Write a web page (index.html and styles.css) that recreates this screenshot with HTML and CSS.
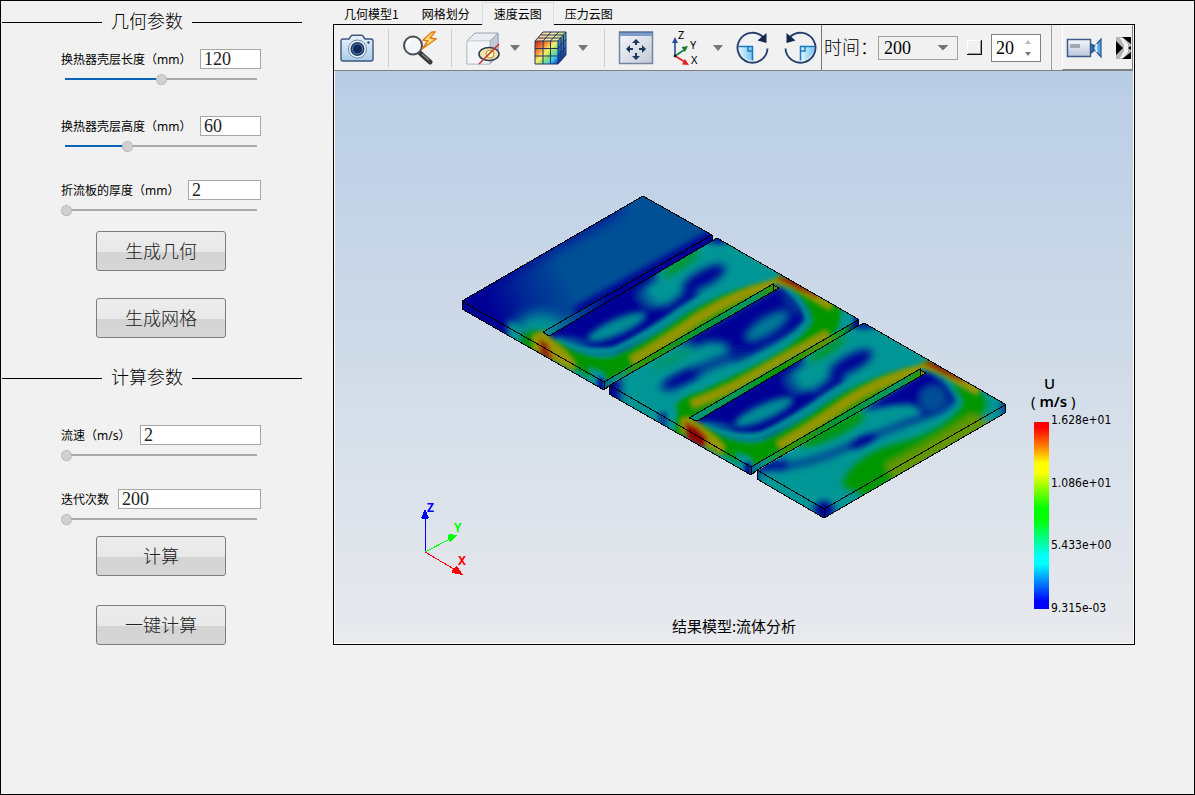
FILE: index.html
```html
<!DOCTYPE html>
<html lang="zh-CN">
<head>
<meta charset="utf-8">
<title>换热器流体分析</title>
<link rel="stylesheet" href="styles.css">
</head>
<body>
<div class="app">
  <form class="params">
    <h2 class="heading">几何参数</h2>
    <div class="field field--first">
      <div class="field-row"><label for="len">换热器壳层长度（mm）</label><input id="len" class="box" type="text" value="120"></div>
      <input class="slider" type="range" aria-label="换热器壳层长度" min="20" max="220" value="121" style="--fill:50%">
    </div>
    <div class="field field--second">
      <div class="field-row"><label for="hei">换热器壳层高度（mm）</label><input id="hei" class="box" type="text" value="60"></div>
      <input class="slider" type="range" aria-label="换热器壳层高度" min="12" max="160" value="60" style="--fill:33%">
    </div>
    <div class="field">
      <div class="field-row"><label for="thk">折流板的厚度（mm）</label><input id="thk" class="box box--m" type="text" value="2"></div>
      <input class="slider" type="range" aria-label="折流板的厚度" min="2" max="20" value="2" style="--fill:0%">
    </div>
    <div class="actions">
      <button type="button" class="push">生成几何</button>
      <button type="button" class="push">生成网格</button>
    </div>
    <h2 class="heading heading--next">计算参数</h2>
    <div class="field">
      <div class="field-row"><label for="vel">流速（m/s）</label><input id="vel" class="box box--l" type="text" value="2"></div>
      <input class="slider" type="range" aria-label="流速" min="2" max="20" value="2" style="--fill:0%">
    </div>
    <div class="field">
      <div class="field-row"><label for="itr">迭代次数</label><input id="itr" class="box box--xl" type="text" value="200"></div>
      <input class="slider" type="range" aria-label="迭代次数" min="200" max="2000" value="200" style="--fill:0%">
    </div>
    <div class="actions actions--run">
      <button type="button" class="push">计算</button>
      <button type="button" class="push">一键计算</button>
    </div>
  </form>

  <main class="view">
    <nav class="tabs">
      <button type="button" class="tab">几何模型1</button>
      <button type="button" class="tab">网格划分</button>
      <button type="button" class="tab tab--on">速度云图</button>
      <button type="button" class="tab">压力云图</button>
    </nav>
    <section class="frame">
      <div class="toolbar">
        <button type="button" class="tool" aria-label="截图">
          <svg width="36" height="34" viewBox="0 0 36 34">
            <defs><linearGradient id="cam" x2="0" y2="1"><stop stop-color="#e8f3fc"/><stop offset="1" stop-color="#a9cdea"/></linearGradient></defs>
            <path d="M2 10q0-2 2-2h6l2-3q.5-.8 1.500-.8h9q1 0 1.500.8l2 3h6q2 0 2 2v18q0 2-2 2h-28q-2 0-2-2z" fill="url(#cam)" stroke="#3c5680" stroke-width="1.400"/>
            <circle cx="18.500" cy="18" r="9" fill="#eef5fb" stroke="#6e88aa"/>
            <circle cx="18.500" cy="18" r="7" fill="#1c3b68"/><circle cx="18.500" cy="18" r="5" fill="#0e2a5a" stroke="#5b86b6"/>
            <circle cx="29.500" cy="11.500" r="1.200" fill="#29486f"/>
          </svg>
        </button>
        <span class="sep"></span>
        <button type="button" class="tool" aria-label="快速缩放">
          <svg width="36" height="34" viewBox="0 0 36 34">
            <path d="M18 22l10 9" stroke="#3b3b3b" stroke-width="5" stroke-linecap="round"/>
            <path d="M20 23l7 6" stroke="#8a8a8a" stroke-width="1.200"/>
            <circle cx="11" cy="14.500" r="9" fill="#f4f7fa" stroke="#4a4e55" stroke-width="2"/>
            <path d="M5 14a6 6 0 0 1 6-6" stroke="#fff" stroke-width="2" fill="none"/>
            <path d="M30 1L21 9l5 1-6 8 14-10-6-1 5-6z" fill="#ffe27a" stroke="#e07a10" stroke-width="1.400"/>
          </svg>
        </button>
        <span class="sep"></span>
        <button type="button" class="tool" aria-label="隐藏对象">
          <svg width="36" height="36" viewBox="0 0 36 36">
            <path d="M2 11l8-8h23v23l-8 8H2z" fill="#e9edf2" stroke="#9aa5b5" stroke-width="1"/>
            <path d="M2 11h23v23" fill="none" stroke="#b4bdc9"/><path d="M25 11l8-8v23l-8 8z" fill="#c3cbd6" stroke="#9aa5b5"/>
            <path d="M2.500 11.500h22v22h-22z" fill="#f3f5f8"/>
            <ellipse cx="24" cy="24" rx="10" ry="6.500" fill="#f4e3ab" stroke="#2f3d5c" stroke-width="1.600"/>
            <circle cx="25" cy="24" r="4" fill="#fff4c4" stroke="#b08a3c"/>
            <path d="M14 34L34 14" stroke="#c8352a" stroke-width="1.600"/>
          </svg>
        </button>
        <button type="button" class="drop" aria-label="更多"><svg width="10" height="6"><path d="M0 0h10L5 6z" fill="#777"/></svg></button>
        <button type="button" class="tool tool--gap" aria-label="云图">
          <svg width="36" height="36" viewBox="0 0 36 36">
            <defs><linearGradient id="cube" x2="1" y2="1"><stop offset=".1" stop-color="#d93a22"/><stop offset=".3" stop-color="#f98f35"/><stop offset=".48" stop-color="#f7f36b"/><stop offset=".62" stop-color="#8ee06f"/><stop offset=".78" stop-color="#3ecbea"/><stop offset=".95" stop-color="#1653cf"/></linearGradient>
            <linearGradient id="cubeT" x2="1"><stop stop-color="#ffc890"/><stop offset=".5" stop-color="#fff0a8"/><stop offset="1" stop-color="#b9dc84"/></linearGradient>
            <linearGradient id="cubeS" x2="0" y2="1"><stop stop-color="#5cb676"/><stop offset=".4" stop-color="#2377cf"/><stop offset="1" stop-color="#0a2bae"/></linearGradient></defs>
            <path d="M2 11h23v23H2z" fill="url(#cube)"/><path d="M2 11l8-9h23l-8 9z" fill="url(#cubeT)"/><path d="M25 11l8-9v23l-8 9z" fill="url(#cubeS)"/>
            <path d="M2 11h23v23H2zM2 11l8-9h23l-8 9M33 2v23l-8 9M10 11v23M17.500 11v23M2 18.500h23l8-9M2 26h23l8-9M10 11l8-9M17.500 11l8-9M5 8h23v23M7.500 5h23v23" fill="none" stroke="#26345c" stroke-width="1"/>
          </svg>
        </button>
        <button type="button" class="drop" aria-label="更多"><svg width="10" height="6"><path d="M0 0h10L5 6z" fill="#777"/></svg></button>
        <span class="sep sep--wide"></span>
        <button type="button" class="tool" aria-label="适合窗口">
          <svg width="36" height="36" viewBox="0 0 36 36">
            <defs><linearGradient id="fit" x2="1" y2="1"><stop stop-color="#f7f9fb"/><stop offset="1" stop-color="#c2cad5"/></linearGradient></defs>
            <path d="M1.500 2.500h33v31h-33z" fill="url(#fit)" stroke="#7385a2" stroke-width="1.500"/>
            <path d="M2 2h32v4H2z" fill="#7e9cc9"/><path d="M1 2h34" stroke="#33507f"/>
            <path d="M18 11v4M18 23v4M10 19h5M21 19h5" stroke="#1d3560" stroke-width="2"/>
            <path d="M18 9l-4 4h8zM18 30l-4-4h8zM8 19l4-4v8zM28 19l-4-4v8z" fill="#1d3560"/>
          </svg>
        </button>
        <button type="button" class="tool tool--gap" aria-label="视图方向">
          <svg width="36" height="38" viewBox="0 0 36 38" class="axis-icon">
            <path d="M7 27V11" stroke="#2a4ba0" stroke-width="1.600"/><path d="M7 8l-3 6h6z" fill="#2a4ba0"/>
            <path d="M7 27l9-6" stroke="#15803a" stroke-width="1.600"/><path d="M20 17l-6.500 1 3.500 5z" fill="#15803a"/>
            <path d="M7 27l10 6" stroke="#e02020" stroke-width="1.600"/><path d="M21 36l-7-.5 3-5.500z" fill="#e02020"/>
            <circle cx="7" cy="27" r="1.300"/><text x="10" y="10">Z</text><text x="22" y="20">Y</text><text x="23" y="35">X</text>
          </svg>
        </button>
        <button type="button" class="drop" aria-label="更多"><svg width="10" height="6"><path d="M0 0h10L5 6z" fill="#777"/></svg></button>
        <button type="button" class="tool tool--turn" aria-label="顺时针旋转">
          <svg width="36" height="36" viewBox="0 0 36 36">
            <defs><linearGradient id="turn" x2="1"><stop stop-color="#e4f4fd"/><stop offset="1" stop-color="#73c6f2"/></linearGradient></defs>
            <path d="M3.500 16.500h14v14A14 14 0 0 1 3.500 16.500z" fill="url(#turn)"/><path d="M3.500 16.500h14v14M13 16.500v4.500h4.500" fill="none" stroke="#1a7cc0" stroke-width="1.500"/>
            <path d="M32.500 18.500A15 15 0 1 1 28 7" fill="none" stroke="#24406f" stroke-width="1.900"/><path d="M31.500 3v10l-9-2.500z" fill="#14284f"/>
          </svg>
        </button>
        <button type="button" class="tool tool--turn" aria-label="逆时针旋转">
          <svg width="36" height="36" viewBox="0 0 36 36">
            <path d="M32.500 16.500h-14v14A14 14 0 0 0 32.500 16.500z" fill="url(#turn)"/><path d="M32.500 16.500h-14v14M23 16.500v4.500h-4.500" fill="none" stroke="#1a7cc0" stroke-width="1.500"/>
            <path d="M3.500 18.500A15 15 0 1 0 8 7" fill="none" stroke="#24406f" stroke-width="1.900"/><path d="M4.500 3v10l9-2.500z" fill="#14284f"/>
          </svg>
        </button>
        <div class="time">
          <label for="time">时间：</label>
          <select id="time" class="combo"><option>200</option></select>
          <button type="button" class="mini" aria-label="播放"></button>
          <div class="spin">
            <input type="text" aria-label="步长" value="20">
            <svg width="8" height="16" viewBox="0 0 8 16"><path d="M1 4l3-4 3 4z" fill="#bbb"/><path d="M1 12h6l-3 4z" fill="#777"/></svg>
          </div>
        </div>
        <div class="record">
          <button type="button" class="rec" aria-label="录制">
            <svg width="36" height="24" viewBox="0 0 36 24">
              <defs><linearGradient id="rec" x2="0" y2="1"><stop stop-color="#f7f9fc"/><stop offset="1" stop-color="#b9c7dc"/></linearGradient></defs>
              <path d="M1.500 3.500h23v17h-23z" fill="url(#rec)" stroke="#3f5b86" stroke-width="1.500"/>
              <path d="M4 8h10v4H4z" fill="#a4a8b0"/>
              <path d="M25 8l4 2 6-7v18l-6-7-4 3z" fill="#55acdf" stroke="#27508c" stroke-width="1.200"/>
              <path d="M31 8q-2 4 0 8" fill="none" stroke="#d3efff" stroke-width="2"/><path d="M27 9v6" stroke="#2c4777" stroke-width="1.500"/>
            </svg>
          </button>
          <button type="button" class="more" aria-label="更多工具">
            <svg width="15" height="22" viewBox="0 0 15 22"><path d="M0 0h15v22H0z" fill="#b5b5b5"/><path d="M0 4l7 7-7 7zM6 0h9v7L10 3zM6 22h9v-7l-5 4zM15 9l-3 2 3 2z" fill="#000"/><path d="M4 1h3l5 6v8l-5 6H4l4-7V8z" fill="#f0f0f0"/></svg>
          </button>
        </div>
      </div>

      <div class="scene">
        <svg class="model" viewBox="335 71 798 572">
          <defs>
            <filter id="b2" x="-30%" y="-50%" width="160%" height="200%"><feGaussianBlur stdDeviation="2"/></filter>
            <filter id="b3" x="-30%" y="-60%" width="160%" height="220%"><feGaussianBlur stdDeviation="3"/></filter>
            <filter id="b4" x="-40%" y="-60%" width="180%" height="220%"><feGaussianBlur stdDeviation="4"/></filter>
            <filter id="b6" x="-40%" y="-60%" width="180%" height="220%"><feGaussianBlur stdDeviation="7"/></filter>
            <clipPath id="c1"><path d="M462 301L643 196 712 235 543 332V357L462 310z"/></clipPath>
            <clipPath id="ca"><path d="M543 332L712 240 717 238 789 280 773 284 604 382V391L543 357z"/></clipPath>
            <clipPath id="cb"><path d="M609 385L779 288 773 284 789 280 858 319V326L689 419V440L609 394z"/></clipPath>
            <clipPath id="cd"><path d="M757 471L926 373 919 369 936 365 1005 404V413L824 518 757 479z"/></clipPath>
            <clipPath id="all"><path d="M462 301L643 196 712 235V240L717 238 858 319V325L864 323 1005 404V413L824 518 757 479V471L751 475 609 394V385L604 390 462 309z"/></clipPath>
            <linearGradient id="g1" gradientUnits="userSpaceOnUse" x1="486" y1="300" x2="560" y2="262"><stop stop-color="#000096"/><stop offset=".5" stop-color="#002d96"/><stop offset="1" stop-color="#005096"/></linearGradient>
            <linearGradient id="w1" x2="1"><stop stop-color="#009696"/><stop offset=".2" stop-color="#004696"/><stop offset=".4" stop-color="#000096"/></linearGradient>
            <linearGradient id="w2" x2="1"><stop stop-color="#006496"/><stop offset=".08" stop-color="#009678"/><stop offset=".2" stop-color="#329600"/><stop offset=".5" stop-color="#009632"/><stop offset=".85" stop-color="#009664"/><stop offset=".96" stop-color="#329600"/><stop offset="1" stop-color="#969600"/></linearGradient>
            <linearGradient id="w3" x2="1"><stop stop-color="#009678"/><stop offset=".3" stop-color="#009650"/><stop offset=".5" stop-color="#009600"/><stop offset=".82" stop-color="#5a9600"/><stop offset=".92" stop-color="#009632"/><stop offset="1" stop-color="#000096"/></linearGradient>

            <g id="fieldA">
              <path d="M530 320L717 230 800 285 604 400 530 370z" fill="#009696"/>
              <g filter="url(#b4)">
                <path d="M548 334L656 268Q642 286 645 306L668 306 690 288 700 296 660 324 625 348Q600 358 556 342z" fill="#000096"/>
                <path d="M548 336L654 272" stroke="#000096" stroke-width="14"/>
                <ellipse cx="704" cy="278" rx="24" ry="8" transform="rotate(-28 704 278)" fill="#000096"/>
                <path d="M640 292L652 304" stroke="#005a96" stroke-width="8"/>
              </g>
              <g filter="url(#b3)">
                <ellipse cx="617" cy="327" rx="32" ry="8" transform="rotate(-24 617 327)" fill="#009696" opacity=".95"/>
                <ellipse cx="570" cy="341" rx="18" ry="3" transform="rotate(8 570 341)" fill="#006e96"/>
                <ellipse cx="681" cy="264" rx="22" ry="5" transform="rotate(-35 681 264)" fill="#009632"/>
                <path d="M710 236h14l4 7h-20z" fill="#000096"/>
              </g>
              <path d="M556 341Q590 355 614 350 650 334 682 310 730 280 790 272" fill="none" stroke="#009696" stroke-width="6" filter="url(#b2)"/>
              <g filter="url(#b2)">
                <path d="M552 339Q590 363 614 357 650 341 682 317 730 285 790 277L778 285 604 384 566 364z" fill="#009600"/>
                <path d="M632 361Q670 339 700 317 740 292 778 283" stroke="#969600" stroke-width="9" fill="none"/>
              </g>
              <path d="M588 366L604 372 612 395H594z" fill="#009696" filter="url(#b2)"/>
              <path d="M598 377L604 379V394H597z" fill="#000096" filter="url(#b2)"/>
            </g>
            <g id="jetTop" filter="url(#b2)">
              <path d="M776 280Q792 282 806 292L832 307" stroke="#969600" stroke-width="9" fill="none"/>
              <path d="M778 278L790 280 818 296 800 289z" fill="#960000" stroke="#960000" stroke-width="3"/>
            </g>
            <g id="slot">
              <path d="M604 382L773 284 779 288 610 385 604 390z" fill="url(#w2)"/>
              <path d="M604 390V382L773 284V291M610 385L779 288 773 285" class="edge"/>
            </g>
          </defs>
          <g clip-path="url(#all)">
            <g clip-path="url(#c1)">
              <path d="M462 190h260v180H462z" fill="url(#g1)"/>
              <g filter="url(#b6)"><path d="M462 298L620 206" stroke="#000096" stroke-width="10"/><ellipse cx="540" cy="328" rx="25" ry="15" fill="#009696"/></g>
              <path d="M575 312L720 230" stroke="#000096" stroke-width="9" filter="url(#b3)"/>
              <g filter="url(#b3)"><path d="M508 320l16 8v30l-16-6z" fill="#009696"/></g>
              <g filter="url(#b3)"><path d="M522 334L536 330 545 334V366L522 350z" fill="#009600"/></g>
            </g>
            <g clip-path="url(#ca)"><use href="#fieldA"/></g>
            <g clip-path="url(#cb)">
              <path d="M600 270h270v180H600z" fill="#009696"/>
              <g filter="url(#b4)">
                <path d="M672 346L779 285Q808 306 808 319 795 334 765 348L738 362Q722 362 730 346 720 338 690 344z" fill="#000096"/>
                <path d="M690 345L772 298" stroke="#000096" stroke-width="10"/>
                <ellipse cx="683" cy="378" rx="24" ry="7" transform="rotate(-25 683 378)" fill="#000096"/>
                <path d="M695 371Q720 360 745 352" stroke="#002896" stroke-width="8" fill="none"/>
                <ellipse cx="672" cy="359" rx="24" ry="4" transform="rotate(-25 672 359)" fill="#009664"/>
                <path d="M600 375h20v30h-20z" fill="#000096"/>
              </g>
              <g filter="url(#b4)">
                <ellipse cx="767" cy="326" rx="26" ry="9" transform="rotate(-32 767 326)" fill="#007d96"/>
                <path d="M783 296Q800 308 799 315" stroke="#005096" stroke-width="6" fill="none"/>
              </g>
              <path d="M658 412h9v18h-9z" fill="#004696" filter="url(#b2)"/>
              <path d="M680 395L752 361Q800 338 808 320 806 304 784 284" fill="none" stroke="#009696" stroke-width="5" filter="url(#b2)"/>
              <g filter="url(#b2)">
                <path d="M678 412Q670 400 700 392L752 367Q800 344 813 322 810 302 788 284L835 300 852 322 690 420 682 440 674 436z" fill="#009600"/>
                <path d="M692 404Q730 391 770 366L828 334" stroke="#969600" stroke-width="8" fill="none"/>
                <path d="M844 306L870 318V330L838 334z" fill="#009696"/><path d="M853 314h12v14h-12z" fill="#000096"/>
              </g>
            </g>
            <g clip-path="url(#ca)" transform="translate(147 85)"><use href="#fieldA"/></g>
            <g clip-path="url(#cd)">
              <path d="M750 360h260v160H750z" fill="#009696"/>
              <g filter="url(#b3)">
                <path d="M858 413L926 370Q952 386 956 401 944 417 920 419 925 408 910 404 885 404 858 413z" fill="#000096"/>
                <ellipse cx="933" cy="399" rx="13" ry="13" fill="#005096"/>
                <path d="M900 424Q935 416 955 400" stroke="#003296" stroke-width="6" fill="none"/>
                <ellipse cx="833" cy="429" rx="36" ry="9" transform="rotate(-26 833 429)" fill="#009619"/>
                <path d="M756 468Q800 468 838 451T905 424" stroke="#005096" stroke-width="8" fill="none"/>
                <ellipse cx="863" cy="441" rx="17" ry="5" transform="rotate(-24 863 441)" fill="#000096"/>
                <path d="M752 466L788 465" stroke="#001496" stroke-width="10"/>
                <path d="M842 486Q848 460 890 445 945 433 964 403L950 382 980 392 994 406 870 497z" fill="#009600"/>
                <path d="M890 466Q930 446 972 418L986 424 896 476z" fill="#649600" stroke="#649600" stroke-width="7"/>
                <path d="M988 392L1008 400V420L988 424z" fill="#009696"/><path d="M1000 398h10v18h-10z" fill="#003c96"/>
                <path d="M812 508L824 500 836 508 824 524z" fill="#000096"/><path d="M754 468h6v16h-6z" fill="#003c96"/>
              </g>
            </g>
            <use href="#jetTop"/><use href="#jetTop" transform="translate(147 85)"/>
            <g filter="url(#b2)"><path d="M532 334L543 331 566 350 576 362 574 372 532 350z" fill="#969600"/><path d="M540 340L547 344 552 360 541 354z" fill="#9b2800" stroke="#9b2800" stroke-width="2"/></g>
            <g filter="url(#b2)"><path d="M680 418L690 416 716 436 726 446 722 456 680 432z" fill="#969600"/><path d="M686 424L696 428 706 438 704 446 688 438z" fill="#960000" stroke="#960000" stroke-width="3"/></g>
          </g>
          <path d="M543 332L712 235V241L549 336z" fill="url(#w1)"/>
          <path d="M689 418L858 320V326L697 421z" fill="url(#w3)"/>
          <use href="#slot"/><use href="#slot" transform="translate(147 85)"/>
          <path class="edge" d="M604 390L462 309V301L643 196 712 235V241L549 336 543 332 712 235M462 301L604 382M712 241L717 238 858 319V326L697 421 689 418 858 320M858 326L864 323 1005 404V413L824 518 757 479V470L824 509 1005 405M824 509V518M757 470L751 475 609 394V385L751 467M610 385L604 390"/>
          <g class="triad">
            <path d="M425 552V518" stroke="#00f" stroke-width="1"/><path d="M425 509l4 9q-4 3-8 0z" fill="#00f"/>
            <path d="M425 552L450 539" stroke="#0f0"/><path d="M457 535l-8-1q-2 4 1 8z" fill="#0f0"/>
            <path d="M425 552L454 569" stroke="#f00"/><path d="M463 575l-6-9q-5 2-5 7z" fill="#f00"/>
            <text x="427" y="512" fill="#00f">Z</text><text x="454" y="532" fill="#0f0">Y</text><text x="458" y="565" fill="#f00">X</text>
          </g>
        </svg>
        <aside class="legend">
          <div class="legend-title"><span class="legend-name">U</span><span>( <b>m/s</b> )</span></div>
          <div class="scale">
            <div class="bar"></div>
            <ul class="ticks"><li>1.628e+01</li><li>1.086e+01</li><li>5.433e+00</li><li>9.315e-03</li></ul>
          </div>
        </aside>
        <p class="caption">结果模型:流体分析</p>
      </div>
    </section>
  </main>
</div>
</body>
</html>
```
FILE: styles.css
```css
* { box-sizing: border-box; }
body {
  margin: 0;
  background: #f1f1f1;
  color: #000;
  font: 12px/16px "Noto Sans", "Noto Sans CJK SC", sans-serif;
}
button, input, select { font: inherit; color: inherit; margin: 0; }
svg { display: block; }

.app {
  display: flex;
  align-items: flex-start;
  gap: 31px;
  min-height: 100vh;
  padding: 0 59px 0 1px;
  border: 1px solid #000;
}

/* parameter column */
.params { flex: 0 0 300px; }
.heading {
  display: flex;
  align-items: center;
  gap: 9px;
  height: 42px;
  margin: 0;
  font: 300 18px/24px "Liberation Serif", "Noto Sans CJK SC", serif;
  white-space: nowrap;
}
.heading::before, .heading::after { content: ""; height: 1px; background: #000; flex: 0 0 100px; }
.heading::after { flex: 1; }
.heading--next { margin: 19px 0 26px; }

.field { width: 200px; margin: 27px 0 0 59px; }
.field--first { margin-top: 6px; }
.field--second { margin-top: 30px; }
.heading--next + .field { margin-top: 0; }
.field-row { display: flex; align-items: center; justify-content: space-between; height: 20px; white-space: nowrap; }
.field-row label { padding-top: 2px; }
.box {
  width: 61px;
  height: 20px;
  padding: 1px 3px 0;
  border: 1px solid #a6a6a6;
  background: #fff;
  color: #222;
  font: 18px/18px "Liberation Serif", serif;
}
.box--m { width: 73px; }
.box--l { width: 121px; }
.box--xl { width: 143px; }

.slider {
  -webkit-appearance: none;
  appearance: none;
  display: block;
  width: 100%;
  height: 14px;
  margin-top: 3px;
  background: linear-gradient(to right, #0a64b8 var(--fill), #a9a9a9 var(--fill)) center / calc(100% - 8px) 2px no-repeat;
}
.slider::-webkit-slider-thumb {
  -webkit-appearance: none;
  width: 11px;
  height: 11px;
  border: 1px dotted #a4a4a4;
  border-radius: 50%;
  background: #d0d0d0;
}

.actions { display: grid; gap: 27px; justify-items: center; width: 130px; margin: 14px 0 0 94px; }
.actions--run { gap: 29px; margin-top: 10px; }
.push {
  width: 100%;
  height: 40px;
  padding: 0 0 2px;
  border: 1px solid #7d7d7d;
  border-radius: 3px;
  background: linear-gradient(#ededed 0, #e8e8e8 52%, #d4d4d4 52%, #d6d6d6 100%);
  color: #222;
  font: 300 18px/24px "Noto Sans CJK SC", sans-serif;
}

/* viewer */
.view { flex: 1; min-width: 0; padding-top: 1px; }
.tabs { display: flex; height: 22px; }
.tab { padding: 2px 12px 0 11px; border: 0; background: none; font: 12px/16px "Noto Sans CJK SC", sans-serif; white-space: nowrap; }
.tab--on { height: 23px; padding: 0 11px; border: 1px solid #dcdcdc; border-bottom: 0; background: #f1f1f1; position: relative; }
.frame { border: 1px solid #000; background: #fff; padding: 0 1px 1px 0; }

.toolbar { display: flex; align-items: center; height: 46px; background: #f1f1f1; border-bottom: 1px solid #808080; }
.toolbar button { border: 0; padding: 0; background: none; display: flex; align-items: center; justify-content: center; flex-shrink: 0; }
.toolbar .tool { width: 46px; height: 40px; }
.toolbar .tool--gap { margin-left: 4px; }
.toolbar .tool--turn { width: 42px; margin-left: 5px; }
.toolbar .drop { width: 18px; height: 40px; }
.sep { width: 1px; height: 38px; margin: 0 8px; background: #cfcfcf; flex-shrink: 0; }
.sep--wide { margin-left: 12px; }
.axis-icon { overflow: visible; }
.axis-icon text { font: 11px "Noto Sans", sans-serif; }

.time {
  display: flex;
  align-items: center;
  align-self: stretch;
  padding: 0 10px 0 2px;
  border-left: 1px solid #777;
  border-right: 1px solid #a0a0a0;
  font: 300 18px/24px "Liberation Serif", "Noto Sans CJK SC", serif;
}
.time label { width: 54px; white-space: nowrap; flex-shrink: 0; }
.combo {
  -webkit-appearance: none;
  appearance: none;
  width: 80px;
  height: 24px;
  padding: 0 5px;
  border: 1px solid #a0a0a0;
  border-radius: 0;
  background:
    linear-gradient(to bottom right, #777 50%, transparent 50%) right 9px center / 5px 6px no-repeat,
    linear-gradient(to bottom left, #777 50%, transparent 50%) right 14px center / 5px 6px no-repeat,
    #f1f1f1;
  font: 18px/20px "Liberation Serif", serif;
}
.toolbar .mini { width: 15px; height: 15px; margin: 0 9px; border: solid #111; border-width: 0 1px 1px 0; box-shadow: inset 1px 1px #fff, inset -1px -1px #999; }
.spin { display: flex; align-items: center; width: 50px; height: 28px; padding-right: 8px; border: 1px solid #808080; background: #fff; }
.spin input { flex: 1; min-width: 0; padding: 0 4px; border: 0; background: none; font: 18px/20px "Liberation Serif", serif; }
.spin svg { flex-shrink: 0; }
.record {
  display: flex;
  align-items: center;
  justify-content: space-between;
  flex: 1;
  align-self: stretch;
  margin-left: 10px;
  padding: 0 1px 0 3px;
  border-top: 1px solid #fff;
  border-left: 1px solid #fff;
  border-right: 1px solid #808080;
  border-bottom: 1px solid #808080;
}

.scene { position: relative; margin-left: 1px; background: linear-gradient(#b9cde5, #d0dbe8 50%, #e8eaed); }
.model { width: 100%; height: auto; }
.edge { fill: none; stroke: #000; stroke-width: 1; shape-rendering: crispEdges; }
.triad path { shape-rendering: crispEdges; }
.triad text { font: bold 12px "Noto Sans", sans-serif; }

.legend { position: absolute; right: 20px; bottom: 27px; width: 82px; font: 12px/16px "DejaVu Sans Condensed", "Noto Sans", sans-serif; }
.legend-title { display: grid; margin-bottom: 2px; font: 15px/18px "Noto Sans", sans-serif; white-space: nowrap; }
.legend-title b { font-weight: 600; }
.legend-name { padding-left: 13px; font-weight: 500; }
.scale { display: flex; gap: 2px; padding-left: 3px; }
.bar {
  width: 15px;
  margin: 10px 0 7px;
  background: linear-gradient(#f00 3%, #ff8000 13%, #ff0 22%, #ff0 27%, #0f0 46%, #0f0 52%, #0ff 72%, #0ff 76%, #00f 96%);
}
.ticks { display: flex; flex-direction: column; justify-content: space-between; height: 204px; margin: 0; padding: 0; list-style: none; }
.caption { position: absolute; left: 0; right: 0; bottom: 8px; margin: 0; text-align: center; font: 15px/18px "Noto Sans CJK SC", sans-serif; }
```
